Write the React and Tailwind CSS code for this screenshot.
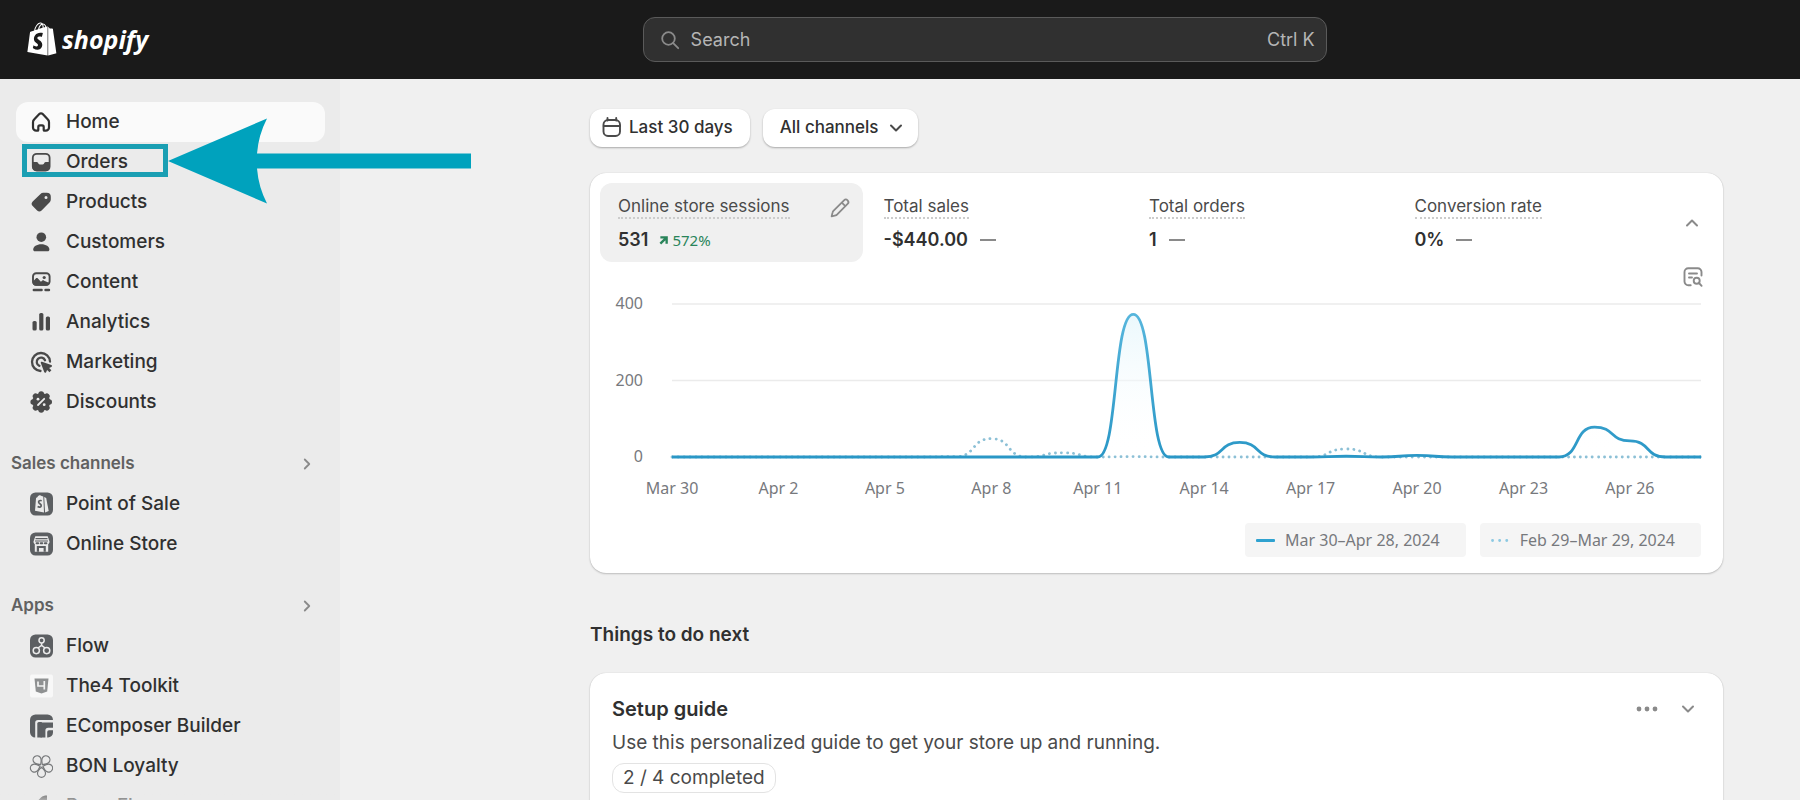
import React from 'react';
import { FaShopify } from 'react-icons/fa';
import { ChevronDown, ChevronRight, ChevronUp } from 'lucide-react';

const Icon = ({ children, className = 'h-6 w-6' }) => (
  <svg viewBox="0 0 24 24" className={`${className} shrink-0`} fill="none" aria-hidden="true">
    {children}
  </svg>
);

const HomeIcon = () => (
  <Icon>
    <path
      d="M4 12.3c0-1 .4-2 1.100-2.700l5.200-5.500a2.300 2.300 0 0 1 3.400 0l5.200 5.500c.7.7 1.100 1.700 1.100 2.700v5.200a3.200 3.200 0 0 1-3.200 3.200h-1.300a.8.8 0 0 1-.8-.8v-3a1.500 1.500 0 0 0-1.500-1.500h-2.400a1.500 1.500 0 0 0-1.500 1.500v3a.8.8 0 0 1-.8.8H7.200A3.200 3.200 0 0 1 4 17.500z"
      stroke="#303030"
      strokeWidth="2.200"
      strokeLinejoin="round"
    />
  </Icon>
);

const OrdersIcon = () => (
  <Icon>
    <rect x="3.800" y="3.800" width="16.800" height="16.800" rx="4" stroke="#4a4a4a" strokeWidth="1.800" />
    <path
      d="M3.500 12h4.100c.6 0 1.100.3 1.400.8l.5.900c.3.500.8.8 1.400.8h2.600c.6 0 1.100-.3 1.400-.8l.5-.9c.3-.5.800-.8 1.400-.8h4.100v5a4 4 0 0 1-4 4h-9.400a4 4 0 0 1-4-4z"
      fill="#4a4a4a"
    />
  </Icon>
);

const ProductsIcon = () => (
  <Icon>
    <path
      fillRule="evenodd"
      d="M14.200 2.800h3.600a4 4 0 0 1 4 4v2.700c0 1-.4 2-1.100 2.700l-8.100 8.200a3.200 3.200 0 0 1-4.500 0l-4.400-4.300a3.200 3.200 0 0 1 0-4.500l7.800-7.700c.7-.7 1.700-1.100 2.700-1.100zm2.800 6.300a1.500 1.500 0 1 0 0-3 1.500 1.500 0 0 0 0 3z"
      fill="#4a4a4a"
    />
  </Icon>
);

const CustomersIcon = () => (
  <Icon>
    <circle cx="12.300" cy="7.200" r="4.800" fill="#4a4a4a" />
    <path d="M4.200 19.500c0-3 3.400-5.300 8.100-5.300s8.100 2.300 8.100 5.300c0 1-.7 1.800-1.700 1.800H5.900c-1 0-1.700-.8-1.700-1.800z" fill="#4a4a4a" />
  </Icon>
);

const ContentIcon = () => (
  <Icon>
    <rect x="4" y="3.200" width="16.600" height="11.600" rx="3.200" stroke="#4a4a4a" strokeWidth="1.900" />
    <path d="M3.500 12l3.300-3.500c.6-.6 1.500-.6 2.100 0l3 3.200 1.200-1c.6-.5 1.500-.5 2 0l5.500 2.300c0 1.700-1.500 2.800-3.200 2.800H7a3.500 3.500 0 0 1-3.500-3.800z" fill="#4a4a4a" />
    <circle cx="15.200" cy="7.500" r="1.600" fill="#4a4a4a" />
    <path d="M4.800 20h7.800M16.500 20h3.500" stroke="#4a4a4a" strokeWidth="2.400" strokeLinecap="round" />
  </Icon>
);

const AnalyticsIcon = () => (
  <Icon>
    <rect x="3.500" y="11" width="4.200" height="9.500" rx="1.600" fill="#4a4a4a" />
    <rect x="10.200" y="3" width="4.200" height="17.500" rx="1.600" fill="#4a4a4a" />
    <rect x="16.800" y="6.500" width="4.200" height="14" rx="1.600" fill="#4a4a4a" />
  </Icon>
);

const MarketingIcon = () => (
  <Icon>
    <path d="M21 11.500A9 9 0 1 0 11.500 21" stroke="#4a4a4a" strokeWidth="2.300" strokeLinecap="round" />
    <path d="M16 10.300a4.300 4.300 0 1 0-5.600 5.600" stroke="#4a4a4a" strokeWidth="2.300" strokeLinecap="round" />
    <path d="M11.800 12.900c-.3-.8.400-1.500 1.200-1.200l9.300 3.300c.9.300.9 1.500.1 1.900l-2.300 1 2.300 2.400-1.900 1.900-2.400-2.300-1 2.300c-.4.800-1.600.8-1.900-.1z" fill="#4a4a4a" />
  </Icon>
);

const DiscountsIcon = () => (
  <Icon>
    <g fill="#4a4a4a">
      <circle cx="12.200" cy="12" r="9" />
      {[0, 45, 90, 135, 180, 225, 270, 315].map((angle) => (
        <circle key={angle} cx="12.200" cy="4" r="2.800" transform={`rotate(${angle} 12.200 12)`} />
      ))}
    </g>
    <path d="M9 15l6.200-6.200" stroke="#ebebeb" strokeWidth="1.800" strokeLinecap="round" />
    <circle cx="9" cy="9.200" r="1.400" fill="#ebebeb" />
    <circle cx="15.200" cy="14.700" r="1.400" fill="#ebebeb" />
  </Icon>
);

const PosIcon = () => (
  <Icon>
    <rect x="1" y="0.500" width="23" height="23" rx="5.500" fill="#5c5f62" />
    <path d="M7 6.500c.1-.8.500-1.200 1.300-1.300 1.200-2 2.900-2.500 4.300-1.200l1.700.4L15 20.500l-9-1.700z" fill="#ebebeb" />
    <path d="M15.200 5l2 .9 2.500 13.200-3.600 1.300z" fill="#ebebeb" />
    <path d="M12.700 8.700c-1.800-.6-3.100.1-3.100 1.400 0 1.700 2.900 1.800 2.600 3.700-.2 1.400-1.800 1.800-3.600.8" stroke="#5c5f62" strokeWidth="1.700" />
  </Icon>
);

const StoreIcon = () => (
  <Icon>
    <rect x="1" y="0.500" width="23" height="23" rx="5.500" fill="#5c5f62" />
    <path d="M6.300 4.200h12.400l1.800 5.300c0 1.300-.5 2.100-1.300 2.600v7.600H5.800v-7.600c-.8-.5-1.300-1.300-1.300-2.600z" fill="#ebebeb" />
    <path d="M6.500 6.600h12M6 9h13" stroke="#5c5f62" strokeWidth="1.200" />
    <path d="M7.600 11.200h1.500M11.700 11.200h1.600M15.900 11.200h1.500" stroke="#5c5f62" strokeWidth="2" strokeLinecap="round" />
    <path d="M7.800 14h2.200v5.700H7.800zM10 14h6.800v2H10zM14.600 14h2.200v5.700h-2.200z" fill="#5c5f62" />
  </Icon>
);

const FlowIcon = () => (
  <Icon>
    <rect x="1" y="0.500" width="23" height="23" rx="5.500" fill="#5c5f62" />
    <g stroke="#ebebeb" strokeWidth="1.500">
      <circle cx="12.600" cy="6.300" r="2.600" />
      <circle cx="7.300" cy="16.600" r="3.100" />
      <circle cx="17.700" cy="16.600" r="3.100" />
      <path d="M12.600 8.900v2.400L9 14M12.600 11.300l3.500 2.700" />
    </g>
  </Icon>
);

const ToolkitIcon = () => (
  <Icon>
    <rect x="1" y="0.500" width="23" height="23" rx="2" fill="#f8f8f8" />
    <path d="M5.500 4.500h14l-1.300 13L12.500 19.500l-5.700-2z" fill="#8f9192" />
    <path d="M9 7.500v4.500h6.200M15.300 7v8.500" stroke="#f3f3f3" strokeWidth="1.700" />
  </Icon>
);

const EComposerIcon = () => (
  <Icon>
    <path d="M6.500.5H18.500A5.500 5.500 0 0 1 24 6H9a2.800 2.800 0 0 0-2.800 2.800v14.700A5.300 5.300 0 0 1 1 18.300V6A5.500 5.500 0 0 1 6.500.5z" fill="#5c5f62" />
    <path d="M11 8.500h13v5.300h-4.800a2.800 2.800 0 0 0-2.800 2.800v6.900h-4.900V8.500z" fill="#5c5f62" />
    <path d="M8.300 9.500A1.500 1.500 0 0 1 9.800 8h3v15.500H8.300z" fill="#5c5f62" />
    <path d="M20 16.200h4v2.300a5 5 0 0 1-5 5h-.8V18a1.800 1.800 0 0 1 1.800-1.800z" fill="#5c5f62" />
  </Icon>
);

const BonIcon = () => (
  <Icon>
    <g stroke="#77797b" strokeWidth="1.200">
      {[0, 72, 144, 216, 288].map((angle) => (
        <path
          key={angle}
          transform={`rotate(${angle} 12.500 11.800)`}
          d="M12.500 13.300c-2.800 2.400-4 4-4 6a4 4 0 0 0 8 0c0-2-1.200-3.600-4-6z"
        />
      ))}
    </g>
  </Icon>
);

const PageIcon = () => (
  <Icon>
    <path d="M18 1.500v9h-5v9L4 11.500 12 3.500c1.500-1.500 3.500-2 6-2z" fill="#4a4a4a" />
  </Icon>
);

const CalendarIcon = () => (
  <Icon>
    <g stroke="#4a4a4a" strokeWidth="1.900" strokeLinecap="round">
      <rect x="3.500" y="4" width="16.500" height="16" rx="4.500" />
      <path d="M3.700 10h16.300M7.500 2v2.500M16.200 2v2.500" />
    </g>
  </Icon>
);

const PencilIcon = () => (
  <Icon>
    <g stroke="#8a8a8a" strokeWidth="1.800" strokeLinejoin="round">
      <path d="M16 4.300a2.500 2.500 0 0 1 3.600 3.600L9 18.600a3 3 0 0 1-1.400.8l-4 1 1-4a3 3 0 0 1 .8-1.500z" />
      <path d="M13.800 6.600l3.500 3.500" />
    </g>
  </Icon>
);

const ReportIcon = () => (
  <Icon>
    <g stroke="#8a8a8a" strokeWidth="1.900" strokeLinecap="round">
      <path d="M20.500 10.500V7a3.800 3.800 0 0 0-3.800-3.800H7.300A3.800 3.800 0 0 0 3.500 7v9.500a3.800 3.800 0 0 0 3.800 3.800h2.400" />
      <path d="M8 8.500h8M8 12.500h3" />
      <circle cx="15.700" cy="15.700" r="3" />
      <path d="M18 18l2.600 2.800" />
    </g>
  </Icon>
);

const mainNav = [
  { label: 'Home', icon: HomeIcon, active: true },
  { label: 'Orders', icon: OrdersIcon, marked: true },
  { label: 'Products', icon: ProductsIcon },
  { label: 'Customers', icon: CustomersIcon },
  { label: 'Content', icon: ContentIcon },
  { label: 'Analytics', icon: AnalyticsIcon },
  { label: 'Marketing', icon: MarketingIcon },
  { label: 'Discounts', icon: DiscountsIcon }
];

const salesChannels = [
  { label: 'Point of Sale', icon: PosIcon },
  { label: 'Online Store', icon: StoreIcon }
];

const apps = [
  { label: 'Flow', icon: FlowIcon },
  { label: 'The4 Toolkit', icon: ToolkitIcon },
  { label: 'EComposer Builder', icon: EComposerIcon },
  { label: 'BON Loyalty', icon: BonIcon },
  { label: 'Page Fly', icon: PageIcon }
];

const metrics = [
  { label: 'Online store sessions', value: '531', change: '572%', active: true },
  { label: 'Total sales', value: '-$440.00' },
  { label: 'Total orders', value: '1' },
  { label: 'Conversion rate', value: '0%' }
];

// One value per day, Mar 30 to Apr 28
const current = [0, 0, 0, 0, 0, 0, 0, 0, 0, 0, 0, 0, 0, 373, 0, 0, 38, 0, 0, 2, 0, 4, 0, 0, 0, 0, 78, 42, 0, 0];
const previous = [0, 0, 0, 0, 0, 0, 0, 0, 1, 48, 0, 11, 0, 1, 0, 0, 0, 0, 0, 21, 0, 0, 0, 0, 0, 0, 0, 0, 0, 0];
const dateLabels = ['Mar 30', 'Apr 2', 'Apr 5', 'Apr 8', 'Apr 11', 'Apr 14', 'Apr 17', 'Apr 20', 'Apr 23', 'Apr 26'];

const CHART_W = 1029;
const CHART_H = 153;

const toPath = (values) => {
  const step = CHART_W / (values.length - 1);
  const y = (v) => CHART_H - (v / 400) * CHART_H;
  return values.reduce((path, v, i) => {
    if (i === 0) return `M0 ${y(v)}`;
    const x0 = (i - 1) * step;
    const handle = step * 0.58;
    return `${path} C${x0 + handle} ${y(values[i - 1])} ${x0 + step - handle} ${y(v)} ${x0 + step} ${y(v)}`;
  }, '');
};

function NavItem({ label, icon: ItemIcon, active, marked }) {
  return (
    <li className="relative">
      <a
        href="#"
        className={`flex h-10 items-center gap-[13px] rounded-xl px-[13px] text-[19px] font-medium text-[#303030] ${
          active ? 'bg-[#fafafa]' : ''
        }`}
      >
        <ItemIcon />
        {label}
      </a>
      {marked && (
        <div className="pointer-events-none absolute top-[2px] left-[6px] z-10 flex h-[33px] items-center">
          <div className="h-full w-[146px] border-5 border-[#1a9fb3]" />
          <svg viewBox="0 0 303 86" className="h-[86px] w-[303px] shrink-0" aria-hidden="true">
            <path d="M0 43L99 .5Q90.500 17 89 35.500H303V50.500H89Q90.500 69 99 85.500z" fill="#00a2bd" />
          </svg>
        </div>
      )}
    </li>
  );
}

function NavSection({ title, items }) {
  return (
    <section>
      <h2>
        <button className="flex h-10 w-full items-center justify-between pr-[9px] pl-[11px] text-[17px] font-semibold text-[#616161]">
          {title}
          <ChevronRight className="h-[18px] w-[18px] text-[#8a8a8a]" strokeWidth={2.4} />
        </button>
      </h2>
      <ul className="pl-4">
        {items.map((item) => (
          <NavItem key={item.label} {...item} />
        ))}
      </ul>
    </section>
  );
}

function Metric({ label, value, change, active }) {
  return (
    <button
      className={`flex h-[79px] items-start justify-between rounded-xl pt-[13px] pr-[11px] pl-[18px] text-left ${
        active ? 'bg-[#f0f0f0]' : ''
      }`}
    >
      <span>
        <span className="block w-fit border-b-2 border-dotted border-[#cccccc] text-[17px] leading-[21px] text-[#4a4a4a]">
          {label}
        </span>
        <span className="mt-[9px] flex items-center">
          <span className="text-lg leading-6 font-semibold text-[#303030]">{value}</span>
          {change ? (
            <span className="ml-[11px] flex items-center gap-1 font-['Noto_Sans',sans-serif] text-[15px] leading-6 text-[#29845a]">
              <svg viewBox="0 0 10 10" className="h-[9px] w-[9px]" fill="none" aria-hidden="true">
                <path d="M1.500 1.500h7v7M8 2L1.500 8.500" stroke="#29845a" strokeWidth="2.600" />
              </svg>
              {change}
            </span>
          ) : (
            <span className="ml-3 h-[2px] w-4 bg-[#8a8a8a]" />
          )}
        </span>
      </span>
      {active && <PencilIcon />}
    </button>
  );
}

function SessionsChart() {
  const line = toPath(current);

  return (
    <div className="flex pr-[22px] pl-[21px] font-['Noto_Sans',sans-serif] text-base text-[#77797d]">
      <div className="flex h-[177px] w-8 flex-col justify-between text-right leading-6">
        <span>400</span>
        <span>200</span>
        <span>0</span>
      </div>
      <div className="ml-[29px] flex-1 pt-[13px]">
        <svg
          viewBox={`0 0 ${CHART_W} ${CHART_H}`}
          preserveAspectRatio="none"
          className="block h-[153px] w-full overflow-visible"
          fill="none"
          role="img"
          aria-label="Online store sessions"
        >
          <defs>
            <linearGradient id="line" gradientUnits="userSpaceOnUse" x1="0" y1="0" x2="0" y2={CHART_H}>
              <stop offset="0" stopColor="#5ab8de" />
              <stop offset="1" stopColor="#2a97c6" />
            </linearGradient>
            <linearGradient id="area" gradientUnits="userSpaceOnUse" x1="0" y1="0" x2="0" y2={CHART_H}>
              <stop offset="0" stopColor="#e8f7fc" />
              <stop offset="1" stopColor="#ffffff" stopOpacity="0" />
            </linearGradient>
          </defs>
          <path d={`M0 0H${CHART_W}M0 76.500H${CHART_W}`} stroke="#ebebeb" strokeWidth="1.500" />
          <path d={`${line}V${CHART_H}H0z`} fill="url(#area)" />
          <path d={toPath(previous)} stroke="#8cc0d6" strokeWidth="2.800" strokeDasharray="0.100 5.900" strokeLinecap="round" />
          <path d={line} stroke="url(#line)" strokeWidth="2.800" />
        </svg>
        <ul className="mt-[19px] flex">
          {dateLabels.map((label) => (
            <li key={label} className="flex w-[10.345%] shrink-0 leading-6">
              <span className="-translate-x-1/2 whitespace-nowrap">{label}</span>
            </li>
          ))}
        </ul>
        <div className="mt-[23px] flex justify-end gap-[14px]">
          <span className="flex h-[34px] items-center gap-[10px] rounded-sm bg-[#f5f5f5] pr-[26px] pl-[11px]">
            <svg viewBox="0 0 19 3" className="h-[3px] w-[19px]" aria-hidden="true">
              <rect width="19" height="3" rx="1" fill="#2fa2d0" />
            </svg>
            Mar 30–Apr 28, 2024
          </span>
          <span className="flex h-[34px] items-center gap-[10px] rounded-sm bg-[#f5f5f5] pr-[26px] pl-[11px]">
            <svg viewBox="0 0 19 3" className="h-[3px] w-[19px]" aria-hidden="true">
              <path d="M1.500 1.500h17" stroke="#8cc9e2" strokeWidth="2.800" strokeDasharray="0.100 7" strokeLinecap="round" />
            </svg>
            Feb 29–Mar 29, 2024
          </span>
        </div>
      </div>
    </div>
  );
}

const cardClass = 'rounded-2xl bg-white shadow-[0_1px_2px_rgba(0,0,0,0.2),0_0_1px_rgba(0,0,0,0.2)]';
const filterClass =
  'flex h-[38px] items-center rounded-xl bg-white text-[17px] font-medium text-[#303030] shadow-[0_1px_2px_rgba(0,0,0,0.3)]';

export default function App() {
  return (
    <div className="flex h-screen flex-col overflow-hidden bg-[#f0f0f0] font-[Inter,sans-serif] text-[#303030]">
      <header className="flex h-[79px] shrink-0 items-center bg-[#1a1a1a]">
        <a href="#" className="flex flex-1 items-center gap-[5px] pb-[2px] pl-[27px] text-white">
          <FaShopify className="h-[34px] w-[30px]" />
          <span className="font-['Open_Sans',sans-serif] text-[25px] leading-8 font-bold italic">shopify</span>
        </a>
        <label className="mr-[26.3%] flex h-[45px] w-[38%] items-center gap-[11px] rounded-xl border border-[#5a5a5a] bg-[#303030] pr-[11px] pl-4 text-lg text-[#b5b5b5]">
          <svg viewBox="0 0 20 20" className="h-5 w-5 shrink-0" fill="none" aria-hidden="true">
            <circle cx="8.500" cy="8.500" r="6.300" stroke="#8a8a8a" strokeWidth="1.800" />
            <path d="M13.200 13.200l5 5" stroke="#8a8a8a" strokeWidth="1.800" strokeLinecap="round" />
          </svg>
          <input
            type="search"
            placeholder="Search"
            aria-label="Search"
            className="min-w-0 flex-1 bg-transparent outline-none placeholder:text-[#b5b5b5]"
          />
          <kbd className="font-[Inter,sans-serif]">Ctrl K</kbd>
        </label>
      </header>

      <div className="flex min-h-0 flex-1">
        <nav className="relative z-10 flex w-[340px] shrink-0 flex-col gap-[22px] bg-[#ebebeb] pt-[23px] pr-[15px]">
          <ul className="pl-4">
            {mainNav.map((item) => (
              <NavItem key={item.label} {...item} />
            ))}
          </ul>
          <NavSection title="Sales channels" items={salesChannels} />
          <NavSection title="Apps" items={apps} />
          <div className="pointer-events-none absolute right-0 bottom-0 left-0 h-3 bg-gradient-to-b from-[#ebebeb]/0 to-[#ebebeb]/60" />
        </nav>

        <main className="min-w-0 flex-1 overflow-hidden pt-[30px] pr-[77px] pl-[250px]">
          <div className="flex gap-[13px]">
            <button className={`${filterClass} gap-[5px] pr-[17px] pl-[10px]`}>
              <CalendarIcon />
              Last 30 days
            </button>
            <button className={`${filterClass} gap-2 pr-3 pl-[17px]`}>
              All channels
              <ChevronDown className="h-5 w-5 text-[#4a4a4a]" strokeWidth={2.4} />
            </button>
          </div>

          {/* Metrics card */}
          <section className={`${cardClass} mt-[26px] pb-4`}>
            <div className="flex items-center pt-[10px] pr-[21px] pl-[10px]">
              <div className="grid flex-1 grid-cols-4 gap-[3px]">
                {metrics.map((metric) => (
                  <Metric key={metric.label} {...metric} />
                ))}
              </div>
              <button aria-label="Collapse metrics" className="ml-[23px]">
                <ChevronUp className="h-5 w-5 text-[#8a8a8a]" strokeWidth={2.4} />
              </button>
            </div>
            <div className="flex h-[29px] items-start justify-end pt-[3px] pr-[18px]">
              <button aria-label="View report">
                <ReportIcon />
              </button>
            </div>
            <SessionsChart />
          </section>

          <h2 className="mt-12 text-[19px] leading-7 font-semibold">Things to do next</h2>

          {/* Setup guide */}
          <section className={`${cardClass} mt-6 h-60 pt-[22px] pr-[25px] pl-[22px]`}>
            <div className="flex items-center justify-between">
              <h3 className="text-xl leading-7 font-semibold">Setup guide</h3>
              <div className="flex items-center gap-5">
                <button aria-label="More actions">
                  <svg viewBox="0 0 22 6" className="h-[6px] w-[22px]" fill="#8a8a8a" aria-hidden="true">
                    <circle cx="3" cy="3" r="2.400" />
                    <circle cx="11" cy="3" r="2.400" />
                    <circle cx="19" cy="3" r="2.400" />
                  </svg>
                </button>
                <button aria-label="Expand setup guide">
                  <ChevronDown className="h-5 w-5 text-[#8a8a8a]" strokeWidth={2.4} />
                </button>
              </div>
            </div>
            <p className="mt-[6px] text-[19px] leading-7 text-[#4a4a4a]">
              Use this personalized guide to get your store up and running.
            </p>
            <span className="mt-[6px] inline-flex h-[30px] items-center rounded-xl border border-[#e3e3e3] px-[10px] text-[19px] text-[#4a4a4a]">
              2 / 4 completed
            </span>
          </section>
        </main>
      </div>
    </div>
  );
}
